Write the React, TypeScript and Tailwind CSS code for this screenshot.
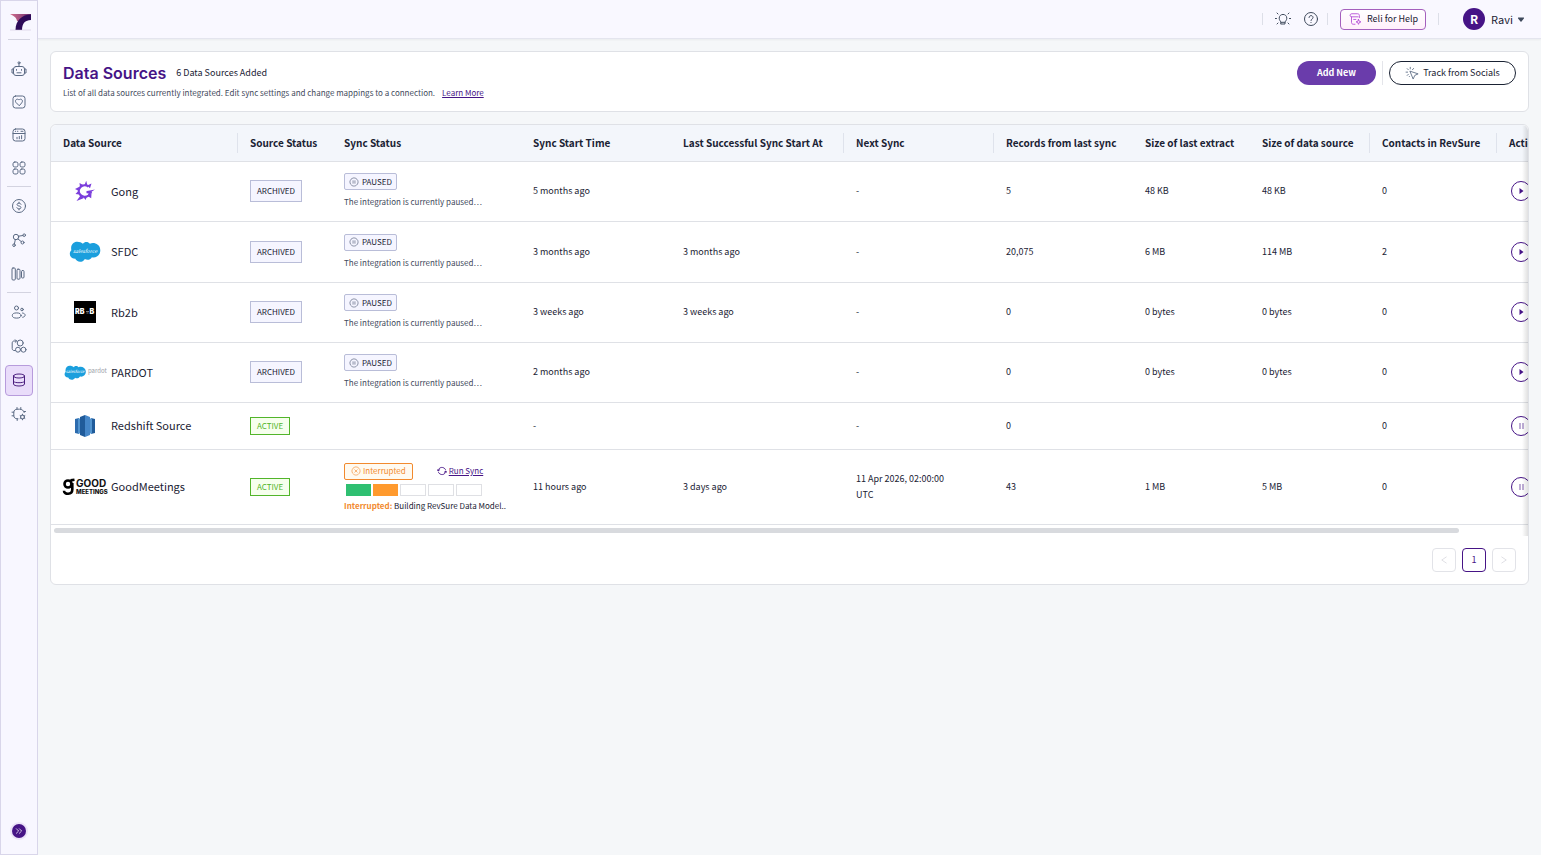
import React from 'react';

type SyncState = 'paused' | 'interrupted' | null;

interface Source {
  name: string;
  logo: React.ReactNode;
  active: boolean;
  sync: SyncState;
  start: string;
  lastSuccess: string;
  next: string;
  records: string;
  extract: string;
  size: string;
  contacts: string;
  rowClass: string;
}

const stroke = {
  fill: 'none',
  stroke: 'currentColor',
  strokeWidth: 1,
  strokeLinecap: 'round' as const,
  strokeLinejoin: 'round' as const,
};

function Icon({ children, className = 'w-4 h-4' }: { children: React.ReactNode; className?: string }) {
  return (
    <svg className={`${className} flex-shrink-0`} viewBox="0 0 16 16" aria-hidden="true" {...stroke}>
      {children}
    </svg>
  );
}

/* ---------- sidebar icons ---------- */

const BotIcon = () => (
  <Icon>
    <rect x="2.5" y="5.5" width="11" height="9" rx="2.5" />
    <path d="M2.5 8H1v4h1.500M13.500 8H15v4h-1.500M8 5.500V3" />
    <circle cx="8" cy="1.800" r="1" />
    <path d="M5.500 8.500v.8M10.500 8.500v.8M6 11.800h4" />
  </Icon>
);

const HeartBoxIcon = () => (
  <Icon>
    <rect x="2" y="2" width="12" height="12" rx="2.5" />
    <path d="M8 11.500 5 8.500C3.300 6.500 6 3.800 8 6c2-2.200 4.700.5 3 2.500z" />
  </Icon>
);

const CalendarIcon = () => (
  <Icon>
    <rect x="2" y="2" width="12" height="12" rx="2.5" />
    <path d="M2 6.500h12M4.300 4.300h.4M6.500 4.300h.4M10 4.300h2M6 11.800v-1.500M8.300 11.800V9.500M10.600 11.800V8.600" />
  </Icon>
);

const GridIcon = () => (
  <Icon>
    <rect x="2" y="2" width="5" height="5" rx="1.800" />
    <rect x="9" y="2" width="5" height="5" rx="1.800" />
    <rect x="2" y="9" width="5" height="5" rx="1.800" />
    <rect x="9" y="9" width="5" height="5" rx="1.800" />
  </Icon>
);

const DollarIcon = () => (
  <Icon>
    <circle cx="8" cy="8" r="6.500" />
    <path d="M10 6.300C9.700 5.500 9 5.200 8 5.200c-2.600 0-2.600 2.500 0 2.800s2.600 2.900 0 2.900c-1 0-1.800-.4-2.100-1.200M8 4.200v1M8 10.900v1" />
  </Icon>
);

const NetworkIcon = () => (
  <Icon>
    <circle cx="5" cy="5" r="2.700" />
    <circle cx="13.200" cy="3.200" r="1.300" />
    <circle cx="11.500" cy="10.500" r="1.500" />
    <circle cx="3" cy="13.200" r="1.300" />
    <path d="M7.500 4.200l4.400-.7M7 7l3.400 2.700M4.300 7.700l-.9 4.200" />
  </Icon>
);

const FunnelIcon = () => (
  <Icon>
    <rect x="1" y="2" width="3.300" height="12" rx="1" />
    <rect x="6" y="3.200" width="3" height="10" rx="1" />
    <rect x="10.500" y="4.500" width="2.500" height="7.500" rx="1" />
  </Icon>
);

const UsersIcon = () => (
  <Icon>
    <circle cx="5.500" cy="4" r="2" />
    <circle cx="11" cy="5.500" r="1.300" />
    <ellipse cx="5.700" cy="11.500" rx="4.400" ry="2.600" />
    <path d="M11.500 9c3.600.3 3.600 3.900.2 4.300" />
  </Icon>
);

const SegmentIcon = () => (
  <Icon>
    <path d="M5.500 3H3C2 3 1.200 3.800 1.200 5v5.500c0 1.200.8 2 1.800 2h1.200M4.200 1.700 5.500 3 4.200 4.300" />
    <circle cx="9.200" cy="5" r="3" />
    <circle cx="7" cy="11.700" r="2.500" />
    <circle cx="12.500" cy="11.700" r="2.500" />
  </Icon>
);

const DatabaseIcon = () => (
  <Icon>
    <path d="M2.500 4c0-1.200 2.400-2 5.500-2s5.500.8 5.500 2-2.400 2-5.500 2-5.500-.8-5.500-2zM2.500 4v8c0 1.200 2.400 2 5.500 2s5.500-.8 5.500-2V4M2.500 9.500c.8.900 2.800 1.200 5.500 1.200s4.700-.3 5.500-1.200" />
  </Icon>
);

const ChipIcon = () => (
  <Icon>
    <path d="M13.200 6.500C12.800 4.500 11 3.200 8.500 3.200H6C4.300 3.200 2.800 4.500 2.800 6.200v3.600c0 1.700 1.500 3 3.200 3h1M6 3.200V1.500M9.800 3.200V1.500M2.800 6.200H1M2.800 9.800H1M6.200 14.500v-1.700M13 5.500h1.500" />
    <circle cx="11.500" cy="11" r="2" />
    <path d="M11.500 8.200v.9M11.500 12.900v.9M9.100 9.600l.8.500M13.100 11.900l.8.500M9.100 12.400l.8-.5M13.100 10.100l.8-.5" />
  </Icon>
);

/* ---------- vendor logos ---------- */

const GongLogo = () => (
  <svg className="w-[22px] h-[22px]" viewBox="0 0 22 22" role="img" aria-label="Gong">
    <path
      d="M14.500 6.500C12 4.800 8.500 5 6.500 7c-2 2.200-2.200 5.500-.3 7.800 2 2.400 6 2.600 8.300.7 1-.9 1.500-2 1.600-3.300H12.500"
      fill="none"
      stroke="#7c3fdc"
      strokeWidth="2.200"
    />
    <path
      d="M10.500 5 12.200.8 13.300 5zM13 5.500l4.500-2-1.500 4.800zM6 7.500 5.500 3l4 2.200zM5 11 1 9l4-2zM5.200 14.500 1.500 14l3.200-3.500zM6.500 15.500 2.500 21l7-2.800-.5-2zM9 16.500l2.500 3.500 1.500-3.500zM13.500 16l3.700 2.300.3-5zM15.500 13.500l2.800-.3-.8-1.500 3.500-2.200-8 1.500v2z"
      fill="#7c3fdc"
    />
  </svg>
);

const cloudPath =
  'M13.500 3C15 .8 18.600.7 20.200 3c4-1.900 9.600.5 10 5.200.9 5.200-3.700 9-8 7.800-1.800 3.200-5.400 2.800-6.800 1.700-2.500 4.300-8 3.300-9.500-.3C1.500 17.700-1 12.500 2.300 9.400 1.200 4.500 4 1 8 1c2.300 0 4.200.8 5.500 2z';

const SalesforceLogo = () => (
  <svg className="w-8 h-[23px]" viewBox="0 0 31 21" role="img" aria-label="Salesforce">
    <path d={cloudPath} fill="#1b9fdd" />
    <text x="15.500" y="11.500" fontSize="5" fontStyle="italic" fill="#fff" textAnchor="middle">salesforce</text>
  </svg>
);

const Rb2bLogo = () => (
  <svg className="w-[22px] h-[22px]" viewBox="0 0 22 22" role="img" aria-label="RB2B">
    <rect width="22" height="22" fill="#000" />
    <text x="1" y="13" fontSize="7" fontWeight="900" fill="#fff" className="font-['Inter',sans-serif]">RB</text>
    <path d="M12 10.500h3M12.500 12h2" stroke="#999" strokeWidth=".8" />
    <text x="15.500" y="13" fontSize="7" fontWeight="900" fill="#fff" className="font-['Inter',sans-serif]">B</text>
  </svg>
);

const PardotLogo = () => (
  <svg className="w-[43px] h-4" viewBox="0 0 43 16" role="img" aria-label="Pardot">
    <g transform="translate(0 1) scale(.72)">
      <path d={cloudPath} fill="#1b9fdd" />
    </g>
    <text x="11" y="9" fontSize="4" fontStyle="italic" fill="#fff" textAnchor="middle">salesforce</text>
    <text x="24" y="9" fontSize="6" fill="#9aa0a8">pardot</text>
  </svg>
);

const RedshiftLogo = () => (
  <svg className="w-5 h-[22px]" viewBox="0 0 20 22" role="img" aria-label="Redshift">
    <path d="M0 4l4-1v16l-4-1z" fill="#2d6cae" />
    <path d="M20 4l-4-1v16l4-1z" fill="#205b9a" />
    <path d="M3 3l3 1v14l-3 1zM17 3l-3 1v14l3 1z" fill="#5294cf" />
    <path d="M5 2l5-2v22l-5-2z" fill="#205b9a" />
    <path d="M15 2l-5-2v22l5-2z" fill="#4586c8" />
  </svg>
);

const GoodMeetingsLogo = () => (
  <svg className="w-[46px] h-[18px] flex-shrink-0 overflow-visible" viewBox="0 0 46 18" role="img" aria-label="GoodMeetings">
    <g fill="none" stroke="#000" strokeWidth="2.600">
      <circle cx="6" cy="6" r="3.500" />
      <path d="M8.500 2.400 12.500 1.800M10.300 5v6.500c0 5.500-8.300 5.500-8.300 1.300" />
    </g>
    <text x="14" y="9" fontSize="10" fontWeight="700" fill="#111" className="font-['Inter',sans-serif]">GOOD</text>
    <text x="14" y="16" fontSize="6" fontWeight="800" fill="#111" className="font-['Inter',sans-serif]">MEETINGS</text>
  </svg>
);

/* ---------- data ---------- */

const paused = { active: false, sync: 'paused' as SyncState, next: '-', rowClass: 'h-[60px]' };

const sources: Source[] = [
  { ...paused, name: 'Gong', logo: <GongLogo />, start: '5 months ago', lastSuccess: '', records: '5', extract: '48 KB', size: '48 KB', contacts: '0' },
  { ...paused, name: 'SFDC', logo: <SalesforceLogo />, start: '3 months ago', lastSuccess: '3 months ago', records: '20,075', extract: '6 MB', size: '114 MB', contacts: '2', rowClass: 'h-[61px]' },
  { ...paused, name: 'Rb2b', logo: <Rb2bLogo />, start: '3 weeks ago', lastSuccess: '3 weeks ago', records: '0', extract: '0 bytes', size: '0 bytes', contacts: '0' },
  { ...paused, name: 'PARDOT', logo: <PardotLogo />, start: '2 months ago', lastSuccess: '', records: '0', extract: '0 bytes', size: '0 bytes', contacts: '0' },
  { name: 'Redshift Source', logo: <RedshiftLogo />, active: true, sync: null, start: '-', lastSuccess: '', next: '-', records: '0', extract: '', size: '', contacts: '0', rowClass: 'h-[47px]' },
  { name: 'GoodMeetings', logo: <GoodMeetingsLogo />, active: true, sync: 'interrupted', start: '11 hours ago', lastSuccess: '3 days ago', next: '11 Apr 2026, 02:00:00 UTC', records: '43', extract: '1 MB', size: '5 MB', contacts: '0', rowClass: 'h-[75px]' },
];

const columns = [
  { label: 'Data Source', width: 'w-[187px]', divider: true },
  { label: 'Source Status', width: 'w-[94px]', divider: false },
  { label: 'Sync Status', width: 'w-[189px]', divider: false },
  { label: 'Sync Start Time', width: 'w-[150px]', divider: false },
  { label: 'Last Successful Sync Start At', width: 'w-[173px]', divider: true },
  { label: 'Next Sync', width: 'w-[150px]', divider: true },
  { label: 'Records from last sync', width: 'w-[139px]', divider: false },
  { label: 'Size of last extract', width: 'w-[117px]', divider: false },
  { label: 'Size of data source', width: 'w-[120px]', divider: true },
  { label: 'Contacts in RevSure', width: 'w-[127px]', divider: true },
  { label: 'Actions', width: 'w-[104px]', divider: false },
];

/* ---------- pieces ---------- */

function NavItem({ label, active, size, children }: { label: string; active?: boolean; size: string; children: React.ReactNode }) {
  return (
    <button aria-label={label} title={label} className={`${size} w-full flex items-center justify-center`}>
      <span
        className={
          active
            ? 'w-7 h-[31px] flex items-center justify-center rounded-sm border border-[#b79bdc] bg-[#e9dcfa] text-[#4a1d7e]'
            : 'flex items-center justify-center'
        }
      >
        {children}
      </span>
    </button>
  );
}

function Sidebar() {
  return (
    <nav className="w-[38px] flex-shrink-0 flex flex-col items-center border border-[#d9d6ea] bg-[#f8f7ff] text-[#5c6b84]">
      <a href="#home" aria-label="RevSure" className="mt-2 h-[30px] pb-1 flex items-center">
        <svg className="ml-1 w-[22px] h-[18px]" viewBox="0 0 22 18" aria-hidden="true">
          <defs>
            <linearGradient id="brand" x1="0" y1="0" x2="1" y2="0">
              <stop offset="0" stopColor="#d4708c" />
              <stop offset="1" stopColor="#6c2c70" />
            </linearGradient>
          </defs>
          <path d="M0 1h21v5l-9 3-5-1C6.500 4.500 4 3 0 1z" fill="url(#brand)" />
          <path d="M21 1.500V7c-6 0-9 3.500-9 10H5.500C5.500 7.500 12 1.500 21 1.500z" fill="#2e0b59" />
          <path d="M0 17h21" stroke="#c9b8d6" strokeWidth=".5" />
        </svg>
      </a>
      <div className="w-[22px] h-px bg-[#d3d3e0]" />
      <div className="w-full mt-3 mb-0.5">
        <NavItem label="Assistant" size="h-[33px]"><BotIcon /></NavItem>
        <NavItem label="Health" size="h-[33px]"><HeartBoxIcon /></NavItem>
        <NavItem label="Reports" size="h-[33px]"><CalendarIcon /></NavItem>
        <NavItem label="Apps" size="h-[33px]"><GridIcon /></NavItem>
      </div>
      <div className="w-6 h-px bg-[#d3d3e0]" />
      <div className="w-full mt-0.5 mb-px">
        <NavItem label="Revenue" size="h-[34px]"><DollarIcon /></NavItem>
        <NavItem label="Attribution" size="h-[34px]"><NetworkIcon /></NavItem>
        <NavItem label="Funnel" size="h-[34px]"><FunnelIcon /></NavItem>
      </div>
      <div className="w-6 h-px bg-[#d3d3e0]" />
      <div className="w-full mt-0.5">
        <NavItem label="Audience" size="h-[34px]"><UsersIcon /></NavItem>
        <NavItem label="Segments" size="h-[34px]"><SegmentIcon /></NavItem>
        <NavItem label="Data Sources" size="h-[34px]" active><DatabaseIcon /></NavItem>
        <NavItem label="Settings" size="h-[34px]"><ChipIcon /></NavItem>
      </div>
      <button aria-label="Expand menu" className="mt-auto mb-4 w-[14px] h-[14px] rounded-full bg-[#461486] ring-2 ring-[#ebe3f8] text-white flex items-center justify-center">
        <Icon className="w-3 h-3">
          <path d="M4.500 5l3 3-3 3M8.500 5l3 3-3 3" />
        </Icon>
      </button>
    </nav>
  );
}

function TopBar() {
  return (
    <header className="h-[39px] flex items-center justify-end border-b border-[#e4e5ee] bg-[#f9f8ff] pr-4 shadow-xs">
      <div className="w-px h-3 bg-[#dddfe8]" />
      <button aria-label="Tips" className="ml-3 text-[#3f4a5c]">
        <Icon>
          <path d="M6 11.500c0-1.200-1.800-2-1.800-4.300 0-5 7.600-5 7.600 0 0 2.300-1.800 3.100-1.800 4.300V13H6zM6 11.300h4" />
          <path d="M.3 7.500h1.200M14.500 7.500h1.200M2 2l1 1M14 2l-1 1M2 13l1-1M14 13l-1-1" />
        </Icon>
      </button>
      <button aria-label="Help" className="ml-3 text-[#3f4a5c]">
        <Icon>
          <circle cx="8" cy="8" r="6.500" />
          <path d="M6 6.500c0-2.600 4-2.600 4 0C10 8 8 8 8 9.500M8 11.500v.1" />
        </Icon>
      </button>
      <div className="ml-2 w-px h-3 bg-[#dddfe8]" />
      <button className="ml-3 h-[21px] px-[7px] flex items-center gap-[5px] rounded border border-[#a560bd] bg-gradient-to-b from-white to-[#fff0fb] text-[9px]">
        <Icon className="w-[14px] h-[14px] text-[#b34bd6]">
          <path d="M13 6.500V4c0-1.200-.8-2-2-2H4.500C3 2 2 3 2.500 4.500c.3.700.8 1 1.500 1V12c0 1.200.8 2 2 2h2M4 5.500h7.500M6.500 8.500h2.500" />
          <path d="M12 8.500l.8 2 2 .8-2 .8-.8 2-.8-2-2-.8 2-.8z" />
        </Icon>
        Reli for Help
      </button>
      <div className="ml-3 w-px h-3 bg-[#dddfe8]" />
      <button className="ml-6 flex items-center text-[11px]">
        <span className="w-[22px] h-[22px] rounded-full bg-[#461486] text-white text-xs font-bold flex items-center justify-center">R</span>
        <span className="ml-[6px]">Ravi</span>
        <svg className="ml-1 w-2 h-2" viewBox="0 0 8 8" aria-hidden="true">
          <path d="M1.500 2.500h5c.5 0 .7.600.4 1L4.500 6.400c-.3.400-.7.400-1 0L1.100 3.500c-.3-.4-.1-1 .4-1z" fill="#3f4a5c" />
        </svg>
      </button>
    </header>
  );
}

function StatusTag({ active }: { active: boolean }) {
  return active ? (
    <span className="inline-flex items-center h-[18px] px-[6px] border border-[#52b52a] bg-[#f6ffed] text-[#52b52a] text-[8px]">ACTIVE</span>
  ) : (
    <span className="inline-flex items-center h-[22px] px-[6px] border border-[#b9bdd8] bg-[#f5f5ff] text-[8px]">ARCHIVED</span>
  );
}

function PausedCell() {
  return (
    <div className="flex flex-col items-start gap-1">
      <span className="inline-flex items-center gap-[3px] h-[17px] px-1 rounded-xs border border-[#b9bdd8] bg-[#f5f5ff] text-[8px]">
        <Icon className="w-[10px] h-[10px] text-[#4d5872]">
          <circle cx="8" cy="8" r="6.500" strokeDasharray="3 1.200" />
          <path d="M6.500 6v4M9.500 6v4" />
        </Icon>
        PAUSED
      </span>
      <span className="text-[8px] leading-4 whitespace-nowrap text-[#3f4a5c]">The integration is currently paused…</span>
    </div>
  );
}

function InterruptedCell() {
  return (
    <div className="flex flex-col items-start text-[8px] whitespace-nowrap">
      <div className="flex items-center">
        <span className="inline-flex items-center gap-0.5 h-[17px] px-[6px] rounded-xs border border-[#f28a2e] bg-[#fffaf0] text-[#f28a2e]">
          <Icon className="w-[10px] h-[10px]">
            <circle cx="8" cy="8" r="6.500" strokeDasharray="3 1.200" />
            <path d="M6 6l4 4M10 6l-4 4" />
          </Icon>
          Interrupted
        </span>
        <button className="ml-6 flex items-center gap-0.5 text-[#461486]">
          <svg className="w-[10px] h-[10px]" viewBox="0 0 16 16" aria-hidden="true" {...stroke} strokeWidth={1.500}>
            <path d="M2 7.500C2.500 1 11 .5 13.500 5.500M14 8.500C13.500 15 5 15.500 2.500 10.500M0 5.500l2 2.500 2.300-2M16 10.500L14 8l-2.300 2" />
          </svg>
          <span className="underline">Run Sync</span>
        </button>
      </div>
      <div className="mt-1 ml-0.5 flex gap-0.5">
        <span className="w-[25px] h-3 bg-[#2fbf71]" />
        <span className="w-[25px] h-3 bg-[#ff9a2e]" />
        <span className="w-[26px] h-3 border border-[#dfe0e4]" />
        <span className="w-[26px] h-3 border border-[#dfe0e4]" />
        <span className="w-[26px] h-3 border border-[#dfe0e4]" />
      </div>
      <div className="mt-1 leading-3">
        <b className="text-[#f28a2e]">Interrupted:</b> Building RevSure Data Model..
      </div>
    </div>
  );
}

function ActionButton({ active }: { active: boolean }) {
  return (
    <button
      aria-label={active ? 'Pause' : 'Resume'}
      className="ml-0.5 w-5 h-5 rounded-full border border-[#461486] text-[#461486] flex items-center justify-center"
    >
      <svg className="w-2 h-2" viewBox="0 0 8 8" aria-hidden="true">
        {active ? (
          <path d="M3 1v6M6 1v6" stroke="currentColor" strokeWidth=".7" fill="none" />
        ) : (
          <path d="M2.500 1 6.500 4l-4 3z" fill="currentColor" />
        )}
      </svg>
    </button>
  );
}

function SourcesTable() {
  return (
    <div className="relative overflow-hidden rounded-t-md">
      <table className="table-fixed w-full min-w-[1550px] border-collapse text-left">
        <thead>
          <tr className="h-9 bg-[#f3f6fb] border-b border-[#dfe1e6]">
            {columns.map(c => (
              <th key={c.label} className={`${c.width} p-0 text-[10px] font-bold whitespace-nowrap`}>
                <div className={c.divider ? 'h-5 pl-3 flex items-center border-r border-[#dfe3ec]' : 'h-5 pl-3 flex items-center'}>
                  {c.label}
                </div>
              </th>
            ))}
          </tr>
        </thead>
        <tbody>
          {sources.map(s => (
            <tr key={s.name} className={`${s.rowClass} border-b border-[#dfe1e6] text-[9px]`}>
              <td className="p-0 pl-3">
                <div className="flex items-center gap-1 text-[11px]">
                  <span className="w-11 flex items-center justify-center">{s.logo}</span>
                  {s.name}
                </div>
              </td>
              <td className="p-0 pl-3"><StatusTag active={s.active} /></td>
              <td className="p-0 pl-3 pt-px">
                {s.sync === 'paused' && <PausedCell />}
                {s.sync === 'interrupted' && <InterruptedCell />}
              </td>
              <td className="p-0 pl-3">{s.start}</td>
              <td className="p-0 pl-3">{s.lastSuccess}</td>
              <td className="p-0 pl-3 pr-10 leading-4">{s.next}</td>
              <td className="p-0 pl-3">{s.records}</td>
              <td className="p-0 pl-3">{s.extract}</td>
              <td className="p-0 pl-3">{s.size}</td>
              <td className="p-0 pl-3">{s.contacts}</td>
              <td className="p-0 pl-3"><ActionButton active={s.active} /></td>
            </tr>
          ))}
        </tbody>
      </table>
      <div className="h-[11px] px-[3px] pt-[3px]">
        <div className="w-[95.5%] h-[5px] rounded-full bg-[#d8dade]" />
      </div>
      {/* fade where columns run off to the right */}
      <div className="absolute inset-y-0 right-0 w-[6px] bg-gradient-to-l from-black/12 to-transparent pointer-events-none" />
    </div>
  );
}

function Pagination() {
  return (
    <div className="flex justify-end gap-[6px] p-3 text-[9px]">
      <button aria-label="Previous page" disabled className="w-6 h-6 rounded border border-[#e2e3e8] text-[#d5d6dc] flex items-center justify-center">
        <Icon className="w-3 h-3"><path d="M11 4 5 8l6 4" /></Icon>
      </button>
      <button aria-current="page" className="w-6 h-6 rounded border border-[#461486] text-[#461486]">1</button>
      <button aria-label="Next page" disabled className="w-6 h-6 rounded border border-[#e2e3e8] text-[#d5d6dc] flex items-center justify-center">
        <Icon className="w-3 h-3"><path d="M5 4l6 4-6 4" /></Icon>
      </button>
    </div>
  );
}

export default function App() {
  return (
    <div className="min-h-screen flex bg-[#f5f7f9] text-[#1a2233] font-['Noto_Sans_CJK_SC',sans-serif]">
      <Sidebar />
      <div className="flex-1 min-w-0">
        <TopBar />
        <main className="p-3 flex flex-col gap-3">
          <section className="h-[61px] px-3 pt-[9px] flex justify-between items-start rounded-md border border-[#dfe1e6] bg-white">
            <div>
              <div className="flex items-center gap-[10px] h-6">
                <h1 className="text-base font-semibold text-[#461486] font-['Inter',sans-serif]">Data Sources</h1>
                <span className="text-[9px]">6 Data Sources Added</span>
              </div>
              <p className="text-[8px] leading-4 text-[#3f4a5c]">
                List of all data sources currently integrated. Edit sync settings and change mappings to a connection.
                <a href="#learn" className="ml-[7px] underline text-[#461486]">Learn More</a>
              </p>
            </div>
            <div className="flex items-center text-[9px]">
              <button className="w-[79px] h-6 rounded-full bg-[#6a3cab] text-white font-bold">Add New</button>
              <div className="mx-[6px] w-px h-6 bg-[#e4e5ea]" />
              <button className="w-[127px] h-6 rounded-full border border-[#1a2233] flex items-center justify-center gap-1">
                <Icon className="w-[14px] h-[14px] text-[#5c6b84]">
                  <path d="M6 6l9 3-3.800 1.700L9.500 14.500z" />
                  <path d="M6 1.500v1.800M2.500 3l1.300 1.300M1.200 7H3M3.800 9.500 2.500 10.800M9.800 2.800 8.500 4.300M5 12v.1" />
                </Icon>
                Track from Socials
              </button>
            </div>
          </section>
          <section className="rounded-md border border-[#dfe1e6] bg-white">
            <SourcesTable />
            <Pagination />
          </section>
        </main>
      </div>
    </div>
  );
}
